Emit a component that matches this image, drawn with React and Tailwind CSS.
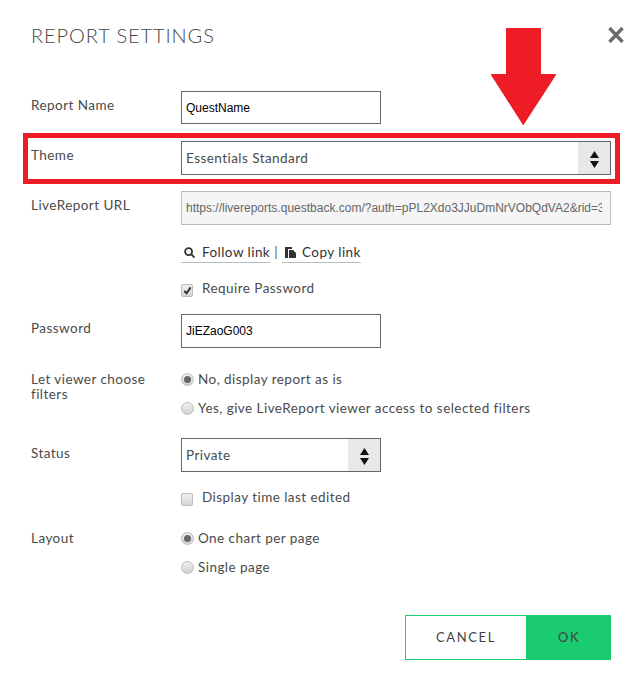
import React from 'react';

const textCls = 'text-[13.5px] leading-[15px] tracking-[0.45px] text-[#4a4a4a]';

function Row({ label, children, className = '' }) {
  return (
    <div className={`flex ${className}`}>
      <div className={`w-[150px] shrink-0 ${textCls}`}>{label}</div>
      <div className="flex-1 min-w-0">{children}</div>
    </div>
  );
}

function Arrows() {
  return (
    <svg className="mt-[2px]" width="9" height="17" viewBox="0 0 9 17" fill="#111">
      <path d="M4.5 0 L9 7 L0 7 Z" />
      <path d="M0 10 L9 10 L4.5 17 Z" />
    </svg>
  );
}

function Select({ value, className }) {
  return (
    <div className={`flex h-[34px] items-stretch border border-[#666] bg-white ${className}`}>
      <div className={`flex-1 pl-1 pt-[9px] ${textCls}`}>{value}</div>
      <div className="flex w-[32px] items-center justify-center bg-[#e8e8e8]">
        <Arrows />
      </div>
    </div>
  );
}

function Radio({ checked }) {
  return (
    <span className="flex h-[13px] w-[13px] shrink-0 items-center justify-center rounded-full border border-[#bbb] bg-linear-to-b from-[#eeeeee] to-[#d2d2d2]">
      {checked && <span className="h-[7px] w-[7px] rounded-full bg-[#666]" />}
    </span>
  );
}

function Check({ checked }) {
  return (
    <span className="mt-[3px] flex h-[13px] w-[12px] shrink-0 items-center justify-center rounded-[2px] border border-[#bbb] bg-linear-to-b from-[#f0f0f0] to-[#d6d6d6]">
      {checked && (
        <svg width="9" height="9" viewBox="0 0 10 10" fill="none" stroke="#333" strokeWidth="2.2">
          <path d="M1.5 5.5 L4 8 L8.5 1.5" />
        </svg>
      )}
    </span>
  );
}

function Option({ checked, children, className = '' }) {
  return (
    <div className={`flex items-center gap-[4px] ${textCls} ${className}`}>
      <Radio checked={checked} />
      <span>{children}</span>
    </div>
  );
}

export default function App() {
  return (
    <div className="relative h-[673px] w-[644px] overflow-hidden bg-white pl-[31px] pr-[33px] pt-[25px] font-['Lato',sans-serif]">
      {/* titre */}
      <div className="flex items-center justify-between">
        <h1 className="text-[20px] font-light leading-[21px] tracking-[0.9px] text-[#444]">REPORT SETTINGS</h1>
        <svg className="-mr-[13px] -mt-[1px]" width="16" height="16" viewBox="0 0 16 16" fill="none" stroke="#6b6b6b" strokeWidth="3.4">
          <path d="M1.5 1 L14.5 15 M14.5 1 L1.5 15" />
        </svg>
      </div>

      <Row label="Report Name" className="mt-[52px]">
        <div className="-mt-[7px] flex h-[33px] w-[200px] items-center border border-[#666] pl-1 pt-[1px] font-['Liberation_Sans',sans-serif] text-[12px] text-black">QuestName</div>
      </Row>

      <Row label="Theme" className="mt-[24px]">
        <Select value="Essentials Standard" className="-mt-[7px] w-[430px]" />
      </Row>

      <Row label="LiveReport URL" className="mt-[23px]">
        <div className="-mt-[7px] flex h-[34px] w-[430px] items-center border border-[#bbb] bg-[#f5f5f5] pl-1 pr-2 font-['Liberation_Sans',sans-serif] text-[12px] text-[#666]">
          <div className="overflow-hidden whitespace-nowrap">https://livereports.questback.com/?auth=pPL2Xdo3JJuDmNrVObQdVA2&rid=3</div>
        </div>
        <div className="mt-[20px] flex items-center text-[13.5px] leading-[15px] tracking-[0.45px] text-[#333]">
          <span className="flex items-center gap-[7px] border-b border-[#bbb] pb-[2px] pl-[3px]">
            <svg width="11" height="11" viewBox="0 0 12 12" fill="none" stroke="#333" strokeWidth="2">
              <circle cx="5" cy="5" r="3.8" />
              <path d="M8 8 L11.5 11.5" />
            </svg>
            Follow link
          </span>
          <span className="ml-[4px] mr-[4px] pb-[3px] text-[#555]">|</span>
          <span className="flex items-center gap-[5px] border-b border-[#bbb] pb-[2px] pl-[2px]">
            <svg width="13" height="13" viewBox="0 0 13 13" fill="#333">
              <path d="M1 1 H8 V3 H4 V12 H1 Z" />
              <path d="M5 4 H9 L12 7 V12 H5 Z" />
            </svg>
            Copy link
          </span>
        </div>
        <div className={`mt-[18px] flex items-start gap-[9px] ${textCls}`}>
          <Check checked />
          <span>Require Password</span>
        </div>
      </Row>

      <Row label="Password" className="mt-[24px]">
        <div className="-mt-[7px] flex h-[34px] w-[200px] items-center border border-[#666] pl-1 font-['Liberation_Sans',sans-serif] text-[12px] text-black">JiEZaoG003</div>
      </Row>

      <Row label={<>Let viewer choose<br />filters</>} className="mt-[24px]">
        <Option checked>No, display report as is</Option>
        <Option className="mt-[14px]">Yes, give LiveReport viewer access to selected filters</Option>
      </Row>

      <Row label="Status" className="mt-[30px]">
        <Select value="Private" className="-mt-[8px] w-[200px]" />
        <div className={`mt-[18px] flex items-start gap-[9px] ${textCls}`}>
          <Check />
          <span>Display time last edited</span>
        </div>
      </Row>

      <Row label="Layout" className="mt-[25px]">
        <Option checked>One chart per page</Option>
        <Option className="mt-[14px]">Single page</Option>
      </Row>

      <div className="mt-[40px] flex justify-end">
        <button className="h-[45px] w-[122px] border border-[#1bcb70] bg-white text-[13px] tracking-[1.6px] text-[#444]">CANCEL</button>
        <button className="h-[45px] w-[84px] bg-[#1bcb70] text-[13px] tracking-[1.6px] text-[#444]">OK</button>
      </div>

      {/* annotations rouges */}
      <div className="pointer-events-none absolute left-[23px] top-[133px] h-[51px] w-[597px] border-[5px] border-[#ee1c25]" />
      <svg className="pointer-events-none absolute left-[490px] top-[27px]" width="66" height="100" viewBox="0 0 66 100" fill="#ee1c25">
        <path d="M17 1 H50 Q51 1 51 2 V47 H65 Q66 47 66 48 L33.5 98 L33 98 L1 48 Q1 47 2 47 H16 V2 Q16 1 17 1 Z" />
      </svg>
    </div>
  );
}
